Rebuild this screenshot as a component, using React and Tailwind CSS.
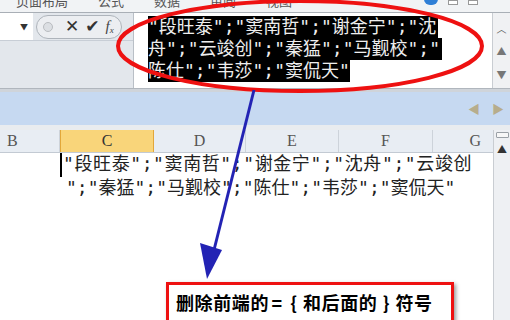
import React from "react";

const mono = "font-['DejaVu_Sans_Mono','Noto_Sans_CJK_SC',monospace]";

const formulaLines = [
  "\"段旺泰\";\"窦南哲\";\"谢金宁\";\"沈",
  "舟\";\"云竣创\";\"秦猛\";\"马觐校\";\"",
  "陈仕\";\"韦莎\";\"窦侃天\"",
];

const columns = [
  { label: "B", w: "w-[60px]" },
  { label: "C", w: "w-[94px]", active: true },
  { label: "D", w: "w-[92px]" },
  { label: "E", w: "w-[93px]" },
  { label: "F", w: "w-[94px]" },
  { label: "G", w: "w-[60px]" },
];

const Annotations = () => (
  <svg className="absolute inset-0 pointer-events-none" width="510" height="320">
    <ellipse cx="300" cy="46" rx="182" ry="45" fill="none" stroke="#ee1111" strokeWidth="4" />
    <line x1="254" y1="90" x2="211" y2="262" stroke="#2323b4" strokeWidth="3" />
    <polygon points="207,279 200,243 222,250" fill="#2323b4" />
  </svg>
);

export default function App() {
  return (
    <div className="relative w-[510px] h-[320px] overflow-hidden bg-white font-['Noto_Sans_CJK_SC',sans-serif]">
      {/* ribbon remnant */}
      <div className="h-[13px] bg-[#f1f3f5] overflow-hidden flex items-start text-[13px] text-[#555] border-b border-[#a9afb6]">
        <div className="-mt-[9px] pl-[16px] flex gap-[30px] whitespace-nowrap">
          <span>页面布局</span>
          <span>公式</span>
          <span>数据</span>
          <span>审阅</span>
          <span>视图</span>
        </div>
        <div className="ml-auto mr-[32px] flex items-start gap-[10px]">
          <span className="w-[14px] h-[6px] -mt-[1px] rounded-b-full bg-[#2f7fd6]" />
          <span className="w-[10px] h-[5px] border border-[#999] bg-white" />
          <span className="w-[10px] h-[5px] border border-[#999] bg-white" />
        </div>
      </div>

      {/* formula bar */}
      <div className="h-[75px] flex bg-[#e3e7ec]">
        <div className="w-[133px] flex flex-col">
          <div className="h-[28px] flex items-center border-b border-[#c8ced6]">
            <div className="w-[33px] h-full bg-white flex items-center justify-end pr-[5px]">
              <span className="text-[8px] text-[#333]">▼</span>
            </div>
            <div className="ml-[3px] w-[86px] h-[24px] rounded-full border border-[#aeb4bb] bg-[#eceef1] flex items-center">
              <span className="ml-[6px] w-[10px] h-[10px] rounded-full border border-[#b9bcc0] bg-[#dcdfe3]" />
              <span className="ml-[12px] text-[17px] leading-none text-[#333] font-['DejaVu_Sans',sans-serif]">✕</span>
              <span className="ml-[6px] text-[17px] leading-none text-[#333] font-['DejaVu_Sans',sans-serif]">✔</span>
              <span className="ml-[6px] text-[15px] italic leading-none text-[#444] font-['Liberation_Serif',serif]">
                f<sub className="text-[9px]">x</sub>
              </span>
            </div>
          </div>
        </div>
        <div className="flex-1 bg-white border-l border-[#b9bfc6] pl-[14px] pt-[3px]">
          {formulaLines.map((line, i) => (
            <div key={i} className="h-[22px] flex">
              <span className={`${mono} bg-black text-[#eeeeee] text-[18px] leading-[22px] whitespace-pre ${i < 2 ? "pr-[2px]" : ""}`}>
                {line}
              </span>
            </div>
          ))}
        </div>
        <div className="w-[18px] bg-[#f0f1f3] border-l border-[#c9cdd2] flex flex-col items-center text-[#555] text-[10px] leading-none">
          <span className="mt-[11px]">︿</span>
          <span className="mt-[12px] text-[#777]">▲</span>
          <span className="mt-[14px] text-[#777]">▼</span>
        </div>
      </div>

      {/* separator + blue band */}
      <div className="h-[4px] bg-[#cfd4da] border-t border-[#b0b6bd]" />
      <div className="h-[33px] bg-[#c6d9f1] flex items-center justify-end pr-[6px] gap-[12px] text-[12px] text-[#b7ad8c]">
        <span>◀</span>
        <span>▶</span>
      </div>
      <div className="h-[5px] bg-[#e9ecef]" />

      {/* sheet */}
      <div className="flex">
        <div className="w-[493px] flex flex-col">
          <div className="h-[23px] flex bg-[#e8edf3] border-b border-[#c3cad3] font-['Liberation_Serif',serif] text-[16px] text-[#555]">
            {columns.map((c) => (
              <div
                key={c.label}
                className={`${c.w} shrink-0 flex items-center justify-center border-r ${
                  c.active
                    ? "bg-[#f9d57a] border-[#e2a73a] border-l text-[#333]"
                    : "border-[#cdd3da]"
                } ${c.label === "B" ? "justify-start pl-[7px]" : ""} ${c.label === "G" ? "justify-end pr-[12px] border-r-0" : ""}`}
              >
                {c.label}
              </div>
            ))}
          </div>
          <div className="h-[170px] bg-white relative">
            <div className={`${mono} text-[18px] leading-[22px] text-[#222]`}>
              <div className="flex items-start pl-[60px] whitespace-pre tracking-[0.6px]">
                <span className="w-[2px] h-[24px] bg-black mr-[1px]" />
                {"\"段旺泰\";\"窦南哲\";\"谢金宁\";\"沈舟\";\"云竣创"}
              </div>
              <div className="pl-[66px] whitespace-pre">
                {"\";\"秦猛\";\"马觐校\";\"陈仕\";\"韦莎\";\"窦侃天\""}
              </div>
            </div>
            <div className="absolute left-[166px] top-[129px] w-[288px] h-[50px] bg-white border-[3px] border-[#ee1111] shadow-[2px_2px_4px_rgba(0,0,0,0.4)] pl-[7px] pt-[4px]">
              <span className="text-[18px] font-bold text-black whitespace-pre tracking-[0.6px]">
                删除前端的<span className="inline-block w-[16px] text-center">=</span>
                <span className="inline-block w-[18px] text-center">{"{"}</span>和后面的
                <span className="inline-block w-[18px] text-center">{"}"}</span>符号
              </span>
            </div>
          </div>
        </div>
        <div className="flex-1 bg-[#eef0f3] border-l border-[#c9cdd2] flex flex-col items-center">
          <div className="mt-[2px] w-[13px] h-[6px] border border-[#9aa0a6] rounded-[1px] bg-[#f7f7f7]" />
          <span className="mt-[6px] text-[10px] text-[#333] leading-none">▲</span>
        </div>
      </div>

      <Annotations />
    </div>
  );
}
